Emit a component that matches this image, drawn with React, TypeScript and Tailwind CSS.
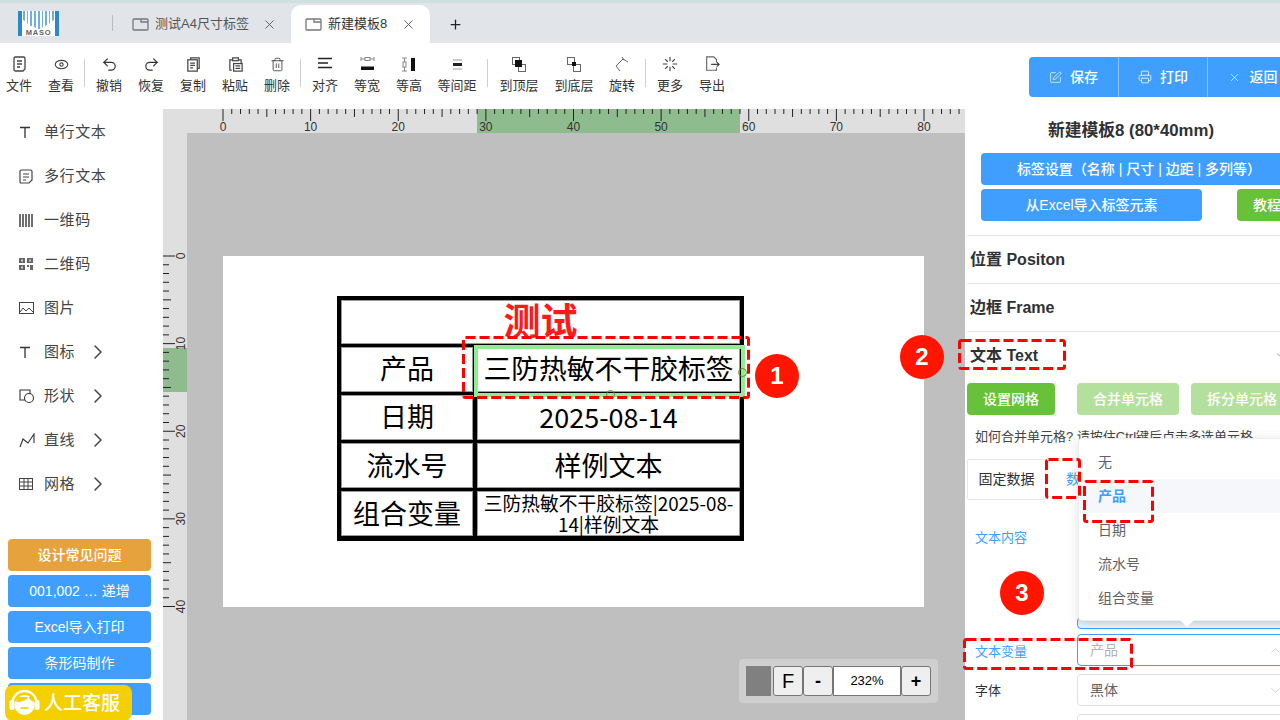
import React from "react";
import { ChevronRight, ChevronUp, ChevronDown, X, Plus, SquarePen, Printer, Undo2, Redo2, Trash2 } from "lucide-react";

const ff = { fontFamily: '"Liberation Sans","Noto Sans CJK SC",sans-serif' };
const cjk = { fontFamily: '"Noto Sans CJK SC",sans-serif' };
const MM = 701 / 80;

function TabIcon() {
  return (
    <svg width="17" height="13" viewBox="0 0 17 13" fill="none" stroke="#777" strokeWidth="1.3">
      <rect x="1" y="1" width="15" height="11" rx="1" />
      <path d="M9 1v3h7" />
    </svg>
  );
}

function Tab({ label, active }: { label: string; active?: boolean }) {
  return (
    <div className={active ? "flex items-center h-[38px] w-[139px] bg-white rounded-t-[10px] pl-[14px] gap-[6px] text-[#333] shrink-0" : "flex items-center h-[38px] w-[178px] pl-[19px] gap-[6px] text-[#555] shrink-0"}>
      <TabIcon />
      <span className="text-[13px] whitespace-nowrap">{label}</span>
      <X size={15} strokeWidth={1.6} className="ml-auto mr-[14px] text-[#666]" />
    </div>
  );
}

function Sep({ ml = 0 }: { ml?: number }) {
  return <div style={{ marginLeft: ml }} className="w-px h-[28px] bg-[#cfcfcf] self-start mt-[16px] mr-[3px] shrink-0" />;
}

function Tool({ icon, label, w = 42 }: { icon: React.ReactNode; label: string; w?: number }) {
  return (
    <div style={{ width: w }} className="flex flex-col items-center shrink-0 pt-[11px]">
      <div className="h-[20px] flex items-center justify-center text-[#333]">{icon}</div>
      <span className="text-[13px] leading-[16px] mt-[4px] text-[#333] whitespace-nowrap">{label}</span>
    </div>
  );
}

const Ic = ({ children, s = 16 }: { children: React.ReactNode; s?: number }) => (
  <svg width={s} height={s} viewBox="0 0 18 18" fill="none" stroke="#444" strokeWidth="1.3">{children}</svg>
);

function SideItem({ icon, label, arrow }: { icon: React.ReactNode; label: string; arrow?: boolean }) {
  return (
    <div className="h-[44px] flex items-center pl-[19px] text-[#444] pt-[2px]">
      <div className="w-[25px] flex items-center shrink-0">{icon}</div>
      <span className="text-[15px] tracking-[0.6px] w-[46px] whitespace-nowrap shrink-0">{label}</span>
      {arrow && <ChevronRight size={24} strokeWidth={1.5} className="-ml-[4px] text-[#444] shrink-0" />}
    </div>
  );
}

function SideBtn({ label, orange }: { label: string; orange?: boolean }) {
  return (
    <div className={orange ? "h-[32px] w-[143px] rounded-[4px] bg-[#e6a23c] text-white text-[14px] flex items-center justify-center font-medium" : "h-[32px] w-[143px] rounded-[4px] bg-[#409eff] text-white text-[14px] flex items-center justify-center"}>
      {label}
    </div>
  );
}

function HRuler() {
  const ticks = [];
  for (let i = 0; i <= 84; i++) {
    const x = 60 + i * MM;
    const h = i % 10 === 0 ? 12 : i % 5 === 0 ? 8 : 5;
    ticks.push(<line key={i} x1={x} x2={x} y1={0} y2={h} stroke="#222" strokeWidth="1" />);
  }
  const labels = [0, 10, 20, 30, 40, 50, 60, 70, 80];
  return (
    <svg width="802" height="24" className="block">
      {ticks}
      {labels.map((l) => (
        <text key={l} x={60 + l * MM} y={22} textAnchor="middle" fontSize="12" fill="#333" fontFamily="Liberation Sans">{l}</text>
      ))}
    </svg>
  );
}

function VRuler() {
  const ticks = [];
  for (let i = 0; i <= 40; i++) {
    const y = 123 + i * MM;
    const w = i % 10 === 0 ? 12 : i % 5 === 0 ? 8 : 6;
    ticks.push(<line key={i} x1={0} x2={w} y1={y} y2={y} stroke="#222" strokeWidth="1" />);
  }
  const labels = [0, 10, 20, 30, 40];
  return (
    <svg width="24" height="520" className="block relative">
      {ticks}
      {labels.map((l) => (
        <text key={l} x={0} y={0} transform={`translate(22 ${123 + l * MM}) rotate(-90)`} textAnchor="middle" fontSize="12" fill="#333" fontFamily="Liberation Sans">{l}</text>
      ))}
    </svg>
  );
}

function Cell({ children, className = "" }: { children?: React.ReactNode; className?: string }) {
  return <div className={"bg-white border border-[#999] flex items-center justify-center text-black text-center " + className}>{children}</div>;
}

function LabelTable() {
  return (
    <div style={cjk} className="absolute left-[114px] top-[40px] w-[407px] h-[245px] bg-black p-[4px] grid grid-cols-[132px_1fr] grid-rows-[44px_45px_45px_45px_45px] gap-x-[4px] gap-y-[3px]">
      <Cell className="col-span-2 leading-none"><span className="text-[37px] font-bold text-[#ff1a1a] mb-[5px]">测试</span></Cell>
      <Cell className="text-[27px]"><span className="-mt-[3px]">产品</span></Cell>
      <Cell className="text-[27.8px] whitespace-nowrap"><span className="-mt-[3px]">三防热敏不干胶标签</span></Cell>
      <Cell className="text-[27px]"><span className="-mt-[2px]">日期</span></Cell>
      <Cell className="text-[27px]">2025-08-14</Cell>
      <Cell className="text-[27px]">流水号</Cell>
      <Cell className="text-[27px]">样例文本</Cell>
      <Cell className="text-[27px]">组合变量</Cell>
      <Cell className="text-[18.8px] leading-[21px] px-[4px]"><span className="-mt-[2px]">三防热敏不干胶标签|2025-08-14|样例文本</span></Cell>
      {/* selected cell */}
      <div className="absolute left-[137px] top-[49px] w-[271px] h-[52px] border-[4px] border-[#90ee90]" />
      <div className="absolute left-[401px] top-[72px] w-[9px] h-[9px] rounded-full border border-[#5f8f1f]" />
      <div className="absolute left-[269px] top-[94px] w-[9px] h-[9px] rounded-full border border-[#5f8f1f]" />
    </div>
  );
}

function Dash({ w, h, className }: { w: number; h: number; className: string }) {
  return (
    <svg className={"absolute pointer-events-none " + className} width={w} height={h}>
      <rect x="1.5" y="1.5" width={w - 3} height={h - 3} fill="none" stroke="#ff0000" strokeWidth="3" strokeDasharray="10 4" rx="2" />
    </svg>
  );
}

function Badge({ n, className }: { n: number; className: string }) {
  return (
    <div className={"absolute w-[44px] h-[44px] rounded-full bg-[#ff1500] text-white font-bold text-[24px] flex items-center justify-center " + className} style={{ fontFamily: '"Liberation Sans",sans-serif' }}>
      {n}
    </div>
  );
}

function Section({ label }: { label: string }) {
  return (
    <div className="h-[48px] border-t border-[#e8e8e8] ml-[2px] flex items-center pl-[3px] pt-[1px] font-bold text-[16px] text-[#303133]">{label}</div>
  );
}

const btn = "h-[32px] rounded-[4px] text-white text-[14px] font-medium flex items-center justify-center shrink-0";

export default function App() {
  return (
    <div style={ff} className="relative w-[1280px] h-[720px] overflow-hidden bg-white flex flex-col">
      {/* tab strip */}
      <div className="h-[43px] shrink-0 bg-[#e1e4e8] border-t-[3px] border-[#cfe0e0] flex items-end">
        <div className="w-[112px] h-full flex items-start pl-[18px] pt-[8px] shrink-0">
          <svg width="41" height="25" viewBox="0 0 41 25">
            <rect width="41" height="25" fill="#fff" />
            <rect width="4" height="25" fill="#2b88c9" />
            <rect x="37" width="4" height="25" fill="#2b88c9" />
            <g fill="#6fb0e0">
              <path d="M5 0h2v10l-2-1zM9 0h1v13l-1-1zM12 0h2v15h-2zM16 0h2v17l-2-1zM20 0h2v18h-2zM24 0h1v16l-1 1zM27 0h2v14l-2 1zM31 0h1v12l-1 1zM34 0h2v9l-2 1z" />
            </g>
            <text x="20.5" y="24" textAnchor="middle" fontSize="7.5" fontWeight="700" letterSpacing="0.8" fill="#5f6468" fontFamily="Liberation Sans">MASO</text>
          </svg>
        </div>
        <div className="w-px h-[16px] bg-[#b9bcc0] self-center shrink-0" />
        <Tab label="测试A4尺寸标签" />
        <Tab label="新建模板8" active />
        <Plus size={15} strokeWidth={2} className="ml-[18px] mb-[11px] text-[#222]" />
      </div>
      {/* toolbar */}
      <div className="h-[66px] shrink-0 bg-white flex items-start relative">
        <Tool w={38} icon={<Ic s={18}><path d="M4 15.5V3.5a1.5 1.5 0 0 1 1.5-1.5h8a1.5 1.5 0 0 1 1.5 1.5V14l-2 2H5.500a1.500 1.500 0 0 1-1.500-1.500z" /><path d="M7 6h5M7 9h5M7 12h3" /></Ic>} label="文件" />
        <Tool w={46} icon={<Ic s={15}><ellipse cx="9" cy="9" rx="7.500" ry="5" /><circle cx="9" cy="9" r="2" /></Ic>} label="查看" />
        <Sep />
        <Tool w={42} icon={<Undo2 size={17} strokeWidth={1.7} />} label="撤销" />
        <Tool w={42} icon={<Redo2 size={17} strokeWidth={1.7} />} label="恢复" />
        <Tool w={42} icon={<Ic s={17}><path d="M6 4V2h9v11h-2" /><rect x="3" y="4" width="10" height="12" /><path d="M5.500 7.500h5M5.500 10h5M5.500 12.500h3" /></Ic>} label="复制" />
        <Tool w={42} icon={<Ic s={17}><path d="M5 15H3V4h3M12 4h3v4" /><rect x="6" y="2" width="6" height="3" /><rect x="7" y="8" width="9" height="8" /><path d="M9 10.500h5M9 13h5" /></Ic>} label="粘贴" />
        <Tool w={42} icon={<Trash2 size={15} strokeWidth={1.3} />} label="删除" />
        <Sep ml={2} />
        <Tool w={42} icon={<svg width="15" height="14" viewBox="0 0 15 14" stroke="#222" strokeWidth="1.500"><path d="M0 1.500h14M0 6h10M0 10.500h14" /></svg>} label="对齐" />
        <Tool w={42} icon={<svg width="15" height="14" viewBox="0 0 15 14" fill="none" stroke="#888" strokeWidth="1"><path d="M1 0v4M14 0v4M1 2h4M10 2h4" /><rect x="5" y="0.500" width="5" height="3" /><rect x="1" y="9.500" width="13" height="3.500" fill="#111" stroke="none" /></svg>} label="等宽" />
        <Tool w={42} icon={<svg width="14" height="15" viewBox="0 0 14 15" fill="none" stroke="#888" strokeWidth="1"><path d="M0 1h5M0 14h5M2.500 1v4M2.500 10v4" /><rect x="1" y="5" width="3" height="5" /><rect x="9" y="1" width="4" height="13" fill="#111" stroke="none" /></svg>} label="等高" />
        <Tool w={54} icon={<svg width="11" height="11" viewBox="0 0 11 11" fill="none"><path d="M1 1h9M1 10h9" stroke="#bbb" strokeWidth="1.500" /><rect x="1" y="4" width="9" height="3" fill="#222" /></svg>} label="等间距" />
        <Sep ml={3} />
        <Tool w={56} icon={<svg width="14" height="15" viewBox="0 0 14 15" fill="none" stroke="#666" strokeWidth="1"><rect x="0.500" y="0.500" width="7" height="7" /><rect x="6.500" y="7.500" width="7" height="7" /><rect x="3" y="3" width="7" height="7" fill="#111" stroke="none" /></svg>} label="到顶层" />
        <Tool w={54} icon={<svg width="14" height="15" viewBox="0 0 14 15" fill="none" stroke="#666" strokeWidth="1"><rect x="0.500" y="0.500" width="7" height="7" /><rect x="6.500" y="7.500" width="7" height="7" /><rect x="5" y="5" width="4" height="4" fill="#111" stroke="none" /></svg>} label="到底层" />
        <Tool w={42} icon={<svg width="15" height="15" viewBox="0 0 15 15" fill="none" stroke="#666" strokeWidth="1"><path d="M1 9L8 2l5 3" /><path d="M1 9l4 5M7 0l2 3" /></svg>} label="旋转" />
        <Sep ml={2} />
        <Tool w={42} icon={<Ic s={16}><path d="M9 1v5M9 12v5M1 9h5M12 9h5M3.500 3.500l3 3M14.500 3.500l-3 3M3.500 14.500l3-3M14.500 14.500l-3-3" /></Ic>} label="更多" />
        <Tool w={42} icon={<Ic s={16}><path d="M14 7V4l-3-3H3v15h11v-3" stroke="#666" /><path d="M8 9.500h9M14.500 7l2.500 2.500-2.500 2.500" /></Ic>} label="导出" />
        {/* action group */}
        <div className="absolute left-[1029px] top-[14px] w-[300px] h-[40px] flex bg-[#409eff] rounded-[4px] text-white text-[14px] font-medium">
          <div className="w-[90px] flex items-center justify-center gap-[8px] border-r border-[#8cc5ff]"><SquarePen size={13} strokeWidth={1.3} />保存</div>
          <div className="w-[89px] flex items-center justify-center gap-[8px] border-r border-[#8cc5ff]"><Printer size={14} strokeWidth={1.3} />打印</div>
          <div className="w-[74px] flex items-center justify-center gap-[9px] pl-[15px]"><X size={13} strokeWidth={1.2} />返回</div>
        </div>
      </div>
      {/* body */}
      <div className="flex-1 flex min-h-0">
        {/* sidebar */}
        <div className="w-[163px] shrink-0 bg-white flex flex-col">
          <SideItem label="单行文本" icon={<svg width="12" height="13" viewBox="0 0 12 13" fill="none" stroke="#333" strokeWidth="1.300"><path d="M1 1.500h10M6 1.500V12" /></svg>} />
          <SideItem label="多行文本" icon={<svg width="14" height="15" viewBox="0 0 14 15" fill="none" stroke="#444" strokeWidth="1.200"><path d="M1 13V2.500A1.500 1.500 0 0 1 2.500 1h9A1.500 1.500 0 0 1 13 2.500V11l-3 3H2a1 1 0 0 1-1-1z" /><path d="M4 5h6M4 8h6M4 11h3" /></svg>} />
          <SideItem label="一维码" icon={<svg width="14" height="13" viewBox="0 0 14 13"><path d="M1 0v13M4 0v13M7 0v13M10 0v13M13 0v13" stroke="#333" strokeWidth="1.400" /></svg>} />
          <SideItem label="二维码" icon={<svg width="14" height="12" viewBox="0 0 14 12" fill="#666"><path d="M0 0h6v5H0zM8 0h6v5H8zM0 7h6v5H0zM8 7h2v2H8zM11 7h3v5h-3z" /><rect x="2" y="1.500" width="2" height="2" fill="#ccc" /><rect x="10" y="1.500" width="2" height="2" fill="#ccc" /><rect x="2" y="8.500" width="2" height="2" fill="#ccc" /></svg>} />
          <SideItem label="图片" icon={<svg width="15" height="12" viewBox="0 0 15 12" fill="none" stroke="#444" strokeWidth="1"><rect x="0.500" y="0.500" width="14" height="11" /><path d="M1 10l3-4 3 3 3-3 4 4" /></svg>} />
          <SideItem label="图标" arrow icon={<svg width="12" height="13" viewBox="0 0 12 13" fill="none" stroke="#333" strokeWidth="1.300"><path d="M1 1.500h10M6 1.500V12" /></svg>} />
          <SideItem label="形状" arrow icon={<svg width="16" height="15" viewBox="0 0 16 15" fill="none" stroke="#333" strokeWidth="1.100"><path d="M9 11H1V1h10v4" /><circle cx="10" cy="9" r="4.500" fill="#fff" /></svg>} />
          <SideItem label="直线" arrow icon={<svg width="16" height="15" viewBox="0 0 16 15" fill="none" stroke="#333" strokeWidth="1.100"><path d="M1 14L4 6l5 4 6-9v9" /></svg>} />
          <SideItem label="网格" arrow icon={<svg width="14" height="12" viewBox="0 0 14 12" fill="none" stroke="#444" strokeWidth="1"><rect x="0.500" y="0.500" width="13" height="11" /><path d="M0 4h14M0 8h14M5 0v12M9 0v12" /></svg>} />
          <div className="mt-[34px] ml-[8px] flex flex-col gap-[4px] relative">
            <SideBtn orange label="设计常见问题" />
            <SideBtn label="001,002 … 递增" />
            <SideBtn label="Excel导入打印" />
            <SideBtn label="条形码制作" />
            <SideBtn label="" />
            <div className="absolute left-[-3px] top-[146px] w-[127px] h-[36px] bg-[#f5d000] rounded-[8px] flex items-center text-white text-[19px] font-medium pl-[2px] gap-[2px] pt-[2px]">
              <svg width="35" height="36" viewBox="0 0 34 36" fill="none" className="-mt-[2px]">
                <path d="M5 18a12 12 0 0 1 24 0" stroke="#fff" strokeWidth="2.400" />
                <circle cx="17" cy="20" r="10" fill="#fff" />
                <path d="M9 17c5 0 10-2 12-5 2 3 3 4 5 5v-5H9z" fill="#f5d000" />
                <rect x="2" y="15" width="5" height="10" rx="2" fill="#fff" />
                <rect x="27" y="15" width="5" height="10" rx="2" fill="#fff" />
                <path d="M13 23h8" stroke="#f5d000" strokeWidth="1.600" />
              </svg>
              人工客服
            </div>
          </div>
        </div>
        {/* canvas */}
        <div className="w-[802px] shrink-0 bg-[#bfbfbf] relative overflow-hidden">
          <div className="h-[24px] bg-[#dfdfdf] relative">
            <div className="absolute left-[314px] top-0 w-[263px] h-[24px] bg-[#8fbc8f]" />
            <div className="absolute left-0 top-0"><HRuler /></div>
          </div>
          <div className="absolute left-0 top-[24px] w-[24px] bottom-0 bg-[#dfdfdf]">
            <div className="absolute left-0 top-[215px] w-[24px] h-[44px] bg-[#8fbc8f]" />
            <VRuler />
          </div>
          {/* label paper */}
          <div className="absolute left-[60px] top-[147px] w-[701px] h-[351px] bg-white">
            <LabelTable />
          </div>
          {/* zoom controls */}
          <div className="absolute left-[576px] top-[550px] h-[44px] w-[199px] rounded-[4px] bg-[#cfcfcf] flex items-center pl-[7px]" style={{ fontFamily: '"Liberation Sans",sans-serif' }}>
            <div className="w-[25px] h-[30px] bg-[#808080] mr-[2px]" />
            <div className="w-[30px] h-[30px] bg-[#efefef] border border-[#767676] rounded-[3px] text-[20px] flex items-center justify-center text-black">F</div>
            <div className="w-[30px] h-[30px] bg-[#efefef] border border-[#767676] rounded-[3px] text-[18px] font-bold flex items-center justify-center text-black">-</div>
            <div className="w-[68px] h-[30px] bg-white border border-[#767676] text-[13px] flex items-center justify-center text-black">232%</div>
            <div className="w-[30px] h-[30px] bg-[#efefef] border border-[#767676] rounded-[3px] text-[18px] font-bold flex items-center justify-center text-black">+</div>
          </div>
        </div>
        {/* right panel */}
        <div className="w-[332px] shrink-0 bg-white relative">
          <div className="text-center font-bold text-[16.8px] leading-[20px] mt-[12px] text-[#303133]">新建模板8 (80*40mm)</div>
          <div className={"mt-[12px] ml-[16px] w-[316px] bg-[#409eff] " + btn}>标签设置（名称 | 尺寸 | 边距 | 多列等）</div>
          <div className="mt-[4px] ml-[16px] flex">
            <div className={"w-[221px] bg-[#409eff] " + btn}>从Excel导入标签元素</div>
            <div className={"w-[70px] ml-[35px] bg-[#67c23a] !justify-start pl-[16px] " + btn}>教程</div>
          </div>
          <div className="mt-[14px]"><Section label="位置 Positon" /><Section label="边框 Frame" /><Section label="文本 Text" /></div>
          <div className="absolute left-[310px] top-[241px] text-[#888]"><ChevronDown size={10} /></div>
          <div className="ml-[2px] mt-[4px] flex">
            <div className={"w-[88px] bg-[#67c23a] " + btn}>设置网格</div>
            <div className={"w-[102px] ml-[22px] bg-[#b3e19d] " + btn}>合并单元格</div>
            <div className={"w-[102px] ml-[12px] bg-[#b3e19d] " + btn}>拆分单元格</div>
          </div>
          <div className="ml-[10px] mt-[14px] text-[13px] leading-[16px] text-[#444] whitespace-nowrap">如何合并单元格? 请按住Ctrl键后点击多选单元格</div>
          <div className="ml-[2px] mt-[14px] flex h-[41px]">
            <div className="w-[79px] border border-[#e4e7ed] rounded-l-[2px] text-[14px] text-[#303133] flex items-center justify-center">固定数据</div>
            <div className="text-[14px] text-[#409eff] flex items-center pl-[20px] whitespace-nowrap">数据绑定</div>
          </div>
          <div className="flex ml-[10px] mt-[19px] h-[110px]">
            <div className="w-[102px] shrink-0 text-[13px] text-[#409eff] pt-[9px] leading-[20px]">文本内容</div>
            <div className="w-[240px] shrink-0 h-[12px] self-end border border-[#409eff] rounded-[4px] bg-gradient-to-b from-[#d5e2f0] to-[#f2f6fb]" />
          </div>
          <div className="flex items-center ml-[10px] mt-[5px]">
            <div className="w-[102px] shrink-0 text-[13px] text-[#409eff] pt-[3px]">文本变量</div>
            <div className="w-[240px] shrink-0 h-[32px] border border-[#409eff] rounded-[4px] flex items-center pl-[12px] pt-[1px] text-[14px] text-[#b3b3b3]">产品<ChevronUp size={15} strokeWidth={1.2} className="absolute left-[303px] text-[#c0c4cc]" /></div>
          </div>
          <div className="flex items-center ml-[10px] mt-[8px]">
            <div className="w-[102px] shrink-0 text-[13px] text-[#303133] pt-[2px]">字体</div>
            <div className="w-[240px] shrink-0 h-[32px] border border-[#dcdfe6] rounded-[4px] flex items-center pl-[12px] text-[14px] text-[#606266]">黑体<ChevronDown size={15} strokeWidth={1.2} className="absolute left-[303px] text-[#c0c4cc]" /></div>
          </div>
          <div className="ml-[112px] mt-[8px] w-[240px] h-[32px] border border-[#dcdfe6] rounded-[4px]" />
          {/* dropdown */}
          <div className="absolute left-[113px] top-[329px] w-[300px] h-[183px] bg-white border border-[#eceef2] rounded-[4px] shadow-[0_2px_12px_rgba(0,0,0,0.12)] pt-[6px] text-[14px] text-[#606266]">
            <div className="h-[34px] flex items-center pl-[19px]">无</div>
            <div className="h-[34px] flex items-center pl-[19px] bg-[#f5f7fa] text-[#409eff] font-bold">产品</div>
            <div className="h-[34px] flex items-center pl-[19px]">日期</div>
            <div className="h-[34px] flex items-center pl-[19px]">流水号</div>
            <div className="h-[34px] flex items-center pl-[19px]">组合变量</div>
            <div className="absolute left-[103px] bottom-[-5px] w-[10px] h-[10px] bg-white rotate-45" />
          </div>
        </div>
      </div>
      {/* annotations */}
      <Dash w={288} h={63} className="left-[462px] top-[336px]" />
      <Dash w={108} h={31} className="left-[958px] top-[339px]" />
      <Dash w={36} h={41} className="left-[1045px] top-[458px]" />
      <Dash w={71} h={43} className="left-[1083px] top-[480px]" />
      <Dash w={170} h={32} className="left-[963px] top-[638px]" />
      <Badge n={1} className="left-[755px] top-[354px]" />
      <Badge n={2} className="left-[900px] top-[335px]" />
      <Badge n={3} className="left-[1000px] top-[571px]" />
    </div>
  );
}
